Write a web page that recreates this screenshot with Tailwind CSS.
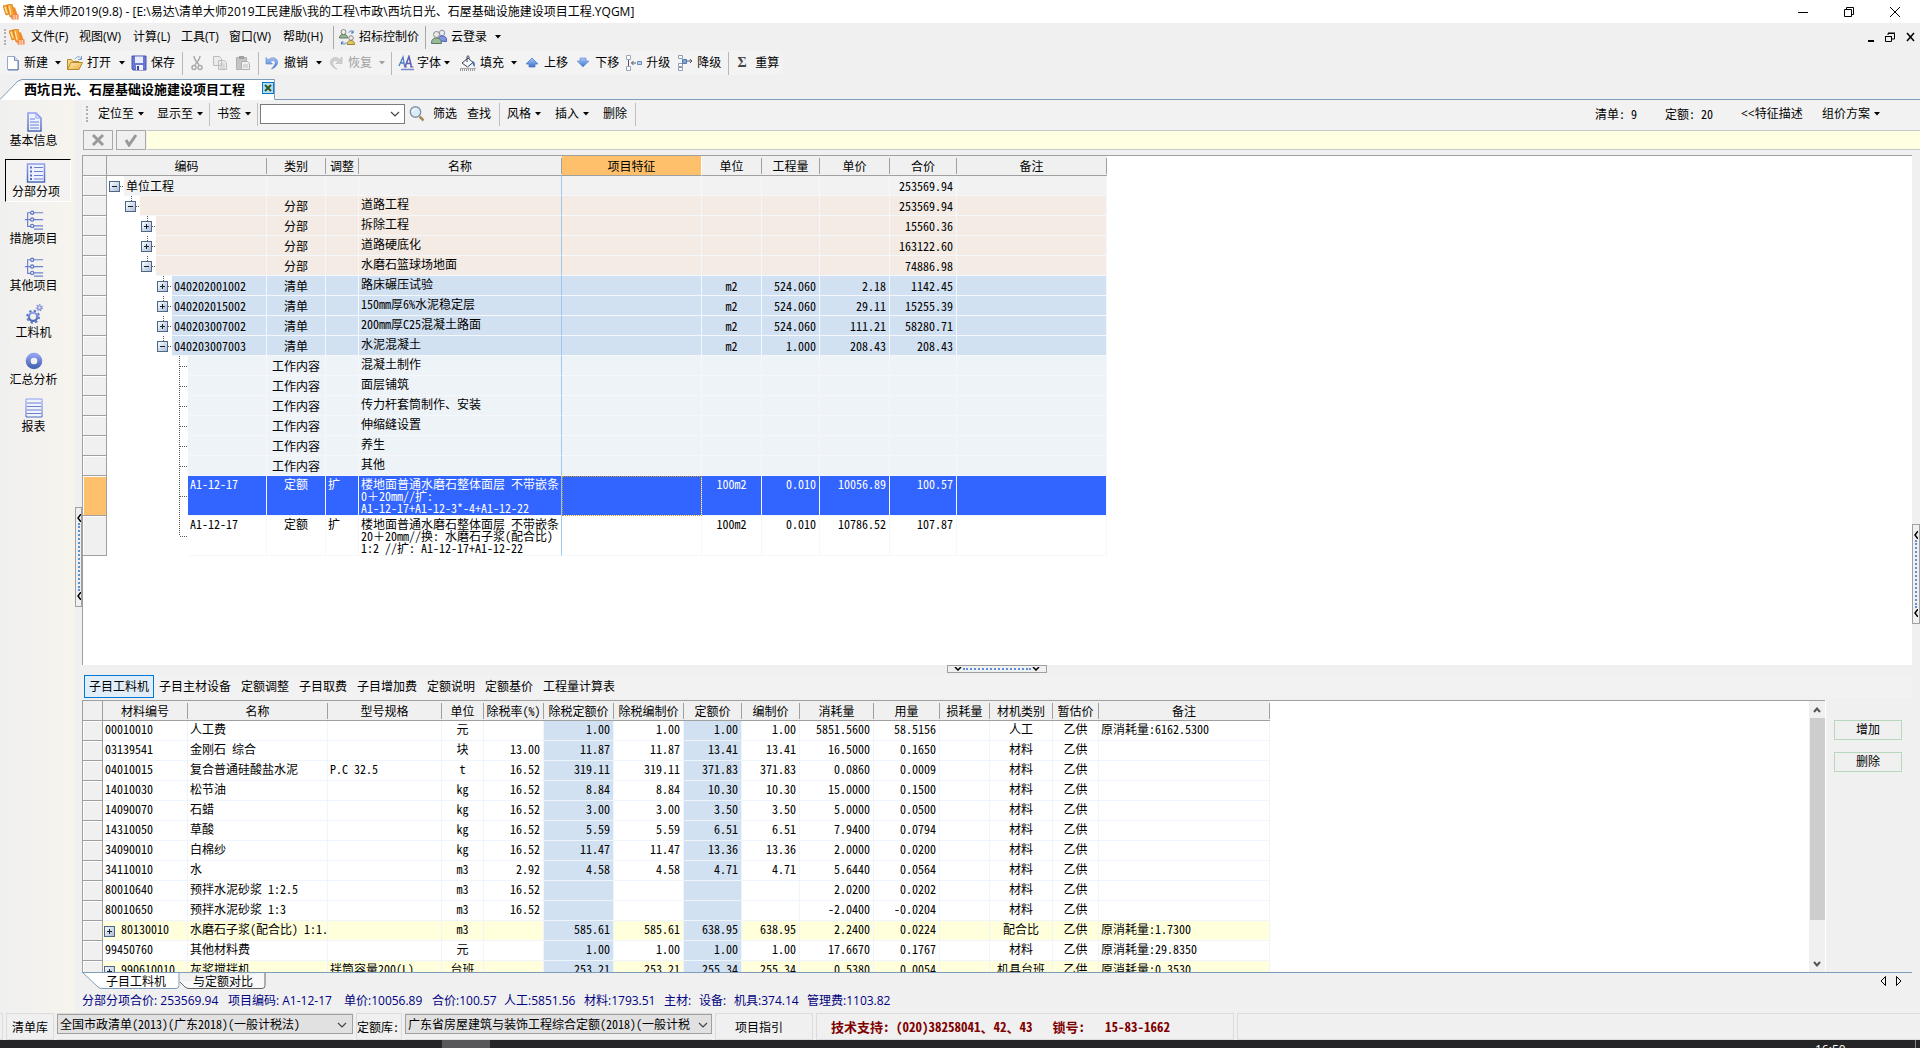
<!DOCTYPE html>
<html lang="zh-CN">
<head>
<meta charset="utf-8">
<title>清单大师2019</title>
<script src="https://cdn.jsdelivr.net/npm/@tailwindcss/browser@4"></script>
</head>
<body class="bg-[#f0f0f0]">
<svg class="absolute h-0 w-0" aria-hidden="true">
  <defs>
    <linearGradient id="gb" x1="0" y1="0" x2="0" y2="1"><stop offset="0" stop-color="#8f9ff0"/><stop offset="1" stop-color="#4a68b4"/></linearGradient>
    <linearGradient id="gx" x1="0" y1="0" x2="1" y2="1"><stop offset="0" stop-color="#ffffff"/><stop offset="1" stop-color="#a9b9d4"/></linearGradient>
    <linearGradient id="gy" x1="0" y1="0" x2="1" y2="1"><stop offset="0" stop-color="#fff3b8"/><stop offset="1" stop-color="#e8a838"/></linearGradient>
    <linearGradient id="gu" x1="0" y1="0" x2="0" y2="1"><stop offset="0" stop-color="#a8c8fa"/><stop offset="1" stop-color="#3f74cc"/></linearGradient>
  </defs>
  <symbol id="logo" viewBox="0 0 16 16"><path d="M0 2 4 1l2 9-3 1zM4 1l5-1 3 11-5 2z" fill="#f5a83a" stroke="#e07c10" stroke-width=".8"/><path d="M2 3l2 6M6 2l2 9" stroke="#ffe6a8" stroke-width="1.200"/><path d="m9 3 3 .5 3 8.500-3 3-5-2 4-1z" fill="#f28a28"/><path d="M8.500 10.500h7v5h-7z" fill="#f27a3a"/><path d="M9.500 12h5M9.500 14h5M11 11v4.500M13.500 11v4.500" stroke="#ffe0c8" stroke-width=".8"/></symbol>
  <symbol id="people" viewBox="0 0 16 16"><circle cx="11" cy="4" r="2.800" fill="#e4e8f2" stroke="#8a94a8"/><path d="M7 12c0-4 2-5 4.500-5S16 8.500 15.500 12.500z" fill="#7f96e0" stroke="#4a5cb0"/><circle cx="5.500" cy="5.500" r="3" fill="#e8e8e4" stroke="#888"/><path d="M.5 14.500C.5 10.500 2 9 5.500 9s5 2 5 5.500z" fill="#9ab89a" stroke="#5c7a60"/></symbol>
  <symbol id="swap" viewBox="0 0 16 16"><circle cx="4.500" cy="3" r="2.500" fill="#ededE6" stroke="#888"/><path d="M.5 9c0-3 2-3.500 4-3.500S8.500 6 8.500 9z" fill="#9ab89a" stroke="#5c7a60"/><circle cx="12" cy="9" r="2.300" fill="#ededE6" stroke="#888"/><path d="M8 15.500c0-3 2-4 4-4s3.500 1 3.500 4z" fill="#e0c860" stroke="#9a8438"/><path d="M10 3.500c1-2 3-2 4 0m0-2v2.500h-2M7 13.500c-1 2-3 2-4.500 0m0 2V13h2" stroke="#3f6cc0" fill="none"/></symbol>
  <symbol id="new" viewBox="0 0 16 16"><path d="M2.500 1.500h7l4 4v9h-11z" fill="#fff" stroke="#93a8ca"/><path d="M13 6v9H3" stroke="#5f7eae" fill="none"/><path d="M9.500 1.500v4h4" fill="#cfdcf2" stroke="#7d93b8"/></symbol>
  <symbol id="open" viewBox="0 0 16 16"><path d="M.5 14.500v-10h4l1.500 2h6v2" fill="#f3d27a" stroke="#b48a2c"/><path d="m.5 14.500 3.500-7h11.500l-3.500 7z" fill="url(#gy)" stroke="#b48a2c"/><path d="M8 4c2-3 5-3 6 0m.5-3V4.500H11" fill="none" stroke="#7a9cd0"/></symbol>
  <symbol id="save" viewBox="0 0 16 16"><path d="M1 1h14v14H2l-1-1z" fill="#6a78d4" stroke="#4a54ac"/><path d="M4 1.500h8V8H4z" fill="#e8ecfc"/><path d="M5 10h7v5H5z" fill="#f0f2fc"/><path d="M6 11h2v4H6z" fill="#34459a"/></symbol>
  <symbol id="cut" viewBox="0 0 16 16"><path d="M5 1c0 4 4 7 5 9M11 1c0 4-4 7-5 9" stroke="#aaa" stroke-width="1.500" fill="none"/><circle cx="5" cy="12.500" r="2" fill="none" stroke="#aaa" stroke-width="1.500"/><circle cx="11" cy="12.500" r="2" fill="none" stroke="#aaa" stroke-width="1.500"/></symbol>
  <symbol id="copy" viewBox="0 0 16 16"><path d="M1.500 1.500h6l2 2v7h-8zM6.500 5.500h6l2 2v7h-8z" fill="#ececec" stroke="#bcbcbc"/><path d="M8 9h5M8 11h5M8 13h5" stroke="#c4c4c4"/></symbol>
  <symbol id="paste" viewBox="0 0 16 16"><path d="M1.500 2.500h10v12h-10z" fill="#c4c4c4" stroke="#b0b0b0"/><path d="M4 1h5v3H4z" fill="#a0a0a0"/><path d="M6.500 6.500h6l2 2v6h-8z" fill="#f0f0f0" stroke="#b0b0b0"/><path d="M8 10h5M8 12h5" stroke="#c0c0c0"/></symbol>
  <symbol id="undo" viewBox="0 0 16 16"><path d="M2 2.500V9h6.500L6.300 6.800c3-2.500 6-.8 4.700 2.200-.8 1.800-2 3-3.500 5C12 12.500 15 8.500 13 5 11 2 7 2.300 4.300 4.800z" fill="url(#gu)" stroke="#5a84c8" stroke-width=".6"/></symbol>
  <symbol id="redo" viewBox="0 0 16 16"><path d="M14 2v6.500H8l2-2c-3-2.500-6 0-5 3 .6 1.600 2 3 4 4.500C4 13 1 8.500 3 4.800 5 1.800 9 2 11.500 4.500z" fill="#d0d0d0" stroke="#b8b8b8" stroke-width=".6"/></symbol>
  <symbol id="font" viewBox="0 0 16 16"><path d="m1 11 4-9 1.500 9M3 8h3" fill="none" stroke="#4c7ec0" stroke-width="1.300"/><path d="m7 12 4-10.500L13.500 12M8.500 8.500h4" fill="none" stroke="#6060b8" stroke-width="1.600"/><path d="M6 12h3M12 12h3.500" stroke="#6060b8"/><path d="M3 14.500h13" stroke="#7a86c8" stroke-width="1.500"/></symbol>
  <symbol id="fill" viewBox="0 0 16 16"><path d="m2 8 6-5 5 4.500-5.500 4.500z" fill="#f4f6fa" stroke="#3c4654"/><path d="M7 7V1.500q1-1.500 2 0V4" stroke="#3c4654" fill="none"/><path d="M12 6c2.500 0 3.500 3 2.500 6-1.500-1-1.500-3-2.500-6z" fill="#3c6cb8"/><path d="M0 14.500h16" stroke="#999" stroke-width="3" stroke-dasharray="1 1"/><path d="M0 13.500h16" stroke="#aaa"/></symbol>
  <symbol id="up" viewBox="0 0 16 16"><path d="m8 3 6 6h-3v3H5V9H2z" fill="url(#gu)" stroke="#4474c4" stroke-width=".7"/></symbol>
  <symbol id="down" viewBox="0 0 16 16"><path d="m8 12 6-6h-3V3H5v3H2z" fill="url(#gu)" stroke="#6a94d8" stroke-width=".7"/></symbol>
  <symbol id="promote" viewBox="0 0 16 16"><path d="M.5.500h4v4h-4zM.5 11.500h4v4h-4z" fill="#fff" stroke="#9aa8bc"/><path d="M11.500 6.500h4v3h-4z" fill="#b9d2f2" stroke="#6b89b8"/><path d="M10 8H5.500M7.500 6l-2 2 2 2M2.500 5v6" stroke="#556" fill="none"/></symbol>
  <symbol id="demote" viewBox="0 0 16 16"><path d="M1.500.500h4v3h-4zM1.500 8.500h4v3h-4zM1.500 12.500h4v3h-4z" fill="#fff" stroke="#8c9cb4"/><path d="M5.500 4.500h4v4h-4z" fill="#7aa6dc" stroke="#5578b0"/><path d="M10 6h5M13 4l2 2-2 2" stroke="#556" fill="none"/></symbol>
  <symbol id="search" viewBox="0 0 16 16"><circle cx="6.500" cy="6" r="5.200" fill="#d8ecfa" stroke="#8494a4" stroke-width="1.400"/><path d="M3.500 6c0-2 1.500-3 3-3" stroke="#fff" fill="none" stroke-width="1.200"/><path d="m10.500 10.500 4 4" stroke="#a88c60" stroke-width="2.500"/></symbol>
  <symbol id="caret" viewBox="0 0 6 4"><path d="M0 0h6L3 3.500z" fill="currentColor"/></symbol>
  <symbol id="chev" viewBox="0 0 10 6"><path d="m1 1 4 4 4-4" fill="none" stroke="#444" stroke-width="1.200"/></symbol>
  <symbol id="plus" viewBox="0 0 11 11"><rect x=".5" y=".5" width="10" height="10" fill="url(#gx)" stroke="#4c6688"/><path d="M3 5.500h5M5.500 3v5" stroke="#123"/></symbol>
  <symbol id="minus" viewBox="0 0 11 11"><rect x=".5" y=".5" width="10" height="10" fill="url(#gx)" stroke="#4c6688"/><path d="M3 5.500h5" stroke="#123"/></symbol>
  <symbol id="doc" viewBox="0 0 20 20"><path d="M4 1h8l5 5v13H4z" fill="#edf0ff" stroke="url(#gb)" stroke-width="1.500"/><path d="M12 1v5h5" fill="none" stroke="#8f9ff0"/><path d="M6 10h9M6 13h9M6 16h9M6 7h5" stroke="#6b80d0"/></symbol>
  <symbol id="list" viewBox="0 0 20 20"><path d="M1.500 1h17v18h-17z" fill="#eef1ff" stroke="url(#gb)" stroke-width="1.500"/><path d="M8 4.500h9M8 8.500h9M8 12.500h9M8 16h9" stroke="#6b80d0"/><path d="M4 4.500h2M4 8.500h2M4 12.500h2M4 16h2" stroke="#5068c0" stroke-width="2"/></symbol>
  <symbol id="tree" viewBox="0 0 20 22"><path d="M8 3H3v15h5M0 10.500h6M9 3h11M9 10.500h11M9 17.500h11M10 21h10" stroke="#6b80cc" stroke-width="1.300" fill="none"/><g fill="#dfe5ff" stroke="#5a72c4" stroke-width="1.200"><circle cx="8" cy="3" r="1.800"/><circle cx="8" cy="10.500" r="1.800"/><circle cx="8" cy="17.500" r="1.800"/></g></symbol>
  <symbol id="gears" viewBox="0 0 20 22"><circle cx="9" cy="14" r="4.600" fill="none" stroke="url(#gb)" stroke-width="2.500"/><circle cx="9" cy="14" r="6.600" fill="none" stroke="#5a76c4" stroke-width="2" stroke-dasharray="2.600 2.580"/><circle cx="16" cy="4" r="2" fill="none" stroke="#8494dc" stroke-width="1.500"/><circle cx="16" cy="4" r="3.400" fill="none" stroke="#8494dc" stroke-width="1.200" stroke-dasharray="1.500 1.550"/></symbol>
  <symbol id="ring" viewBox="0 0 20 20"><circle cx="10" cy="10" r="5.800" fill="none" stroke="url(#gb)" stroke-width="5"/></symbol>
  <symbol id="sheet" viewBox="0 0 20 20"><path d="M2 1h16v18H2z" fill="#f1f3ff" stroke="url(#gb)"/><path d="M3 5h14M3 8.500h14M3 12h14M3 15.500h14" stroke="#6b80d0"/></symbol>
</svg>

<div class="flex h-screen w-full flex-col overflow-hidden bg-[#f0f0f0] text-xs text-black font-['Open_Sans','Noto_Sans_CJK_SC',sans-serif]">

  <!-- title bar -->
  <header class="flex h-[23px] shrink-0 items-center bg-white">
    <svg class="ml-[3px] size-4"><use href="#logo"/></svg>
    <h1 class="ml-1 whitespace-nowrap">清单大师2019(9.8) - [E:\易达\清单大师2019工民建版\我的工程\市政\西坑日光、石屋基础设施建设项目工程.YQGM]</h1>
    <div class="ml-auto flex items-center gap-8 pr-[18px]">
      <button aria-label="最小化" class="grid size-3.5 place-items-center"><svg class="h-3 w-3" viewBox="0 0 12 12"><path d="M1 6.500h10" stroke="#000"/></svg></button>
      <button aria-label="还原" class="grid size-3.5 place-items-center"><svg class="h-3 w-3" viewBox="0 0 12 12"><path d="M1.500 3.500h7v7h-7zM3.500 3.500v-2h7v7h-2" fill="none" stroke="#000"/></svg></button>
      <button aria-label="关闭" class="grid size-3.5 place-items-center"><svg class="h-3 w-3" viewBox="0 0 12 12"><path d="m1 1 10 10M11 1 1 11" stroke="#000"/></svg></button>
    </div>
  </header>

  <!-- menu bar -->
  <nav class="flex h-7 shrink-0 items-center whitespace-nowrap">
    <span class="ml-1 h-4 w-[3px] border-l-2 border-dotted border-[#b0b0b0]"></span>
    <svg class="ml-0.5 size-4"><use href="#logo"/></svg>
    <div class="ml-1.5 flex text-left">
      <button class="w-12 text-left">文件(F)</button><button class="w-[54px] text-left">视图(W)</button><button class="w-12 text-left">计算(L)</button><button class="w-12 text-left">工具(T)</button><button class="w-[54px] text-left">窗口(W)</button><button class="w-[50px] text-left">帮助(H)</button>
    </div>
    <span class="h-[23px] w-px bg-[#a8a8a8]"></span>
    <button class="ml-[5px] flex items-center gap-1"><svg class="size-4"><use href="#swap"/></svg>招标控制价</button>
    <span class="ml-1.5 h-[23px] w-px bg-[#a8a8a8]"></span>
    <button class="ml-[5px] flex items-center gap-1"><svg class="size-4"><use href="#people"/></svg>云登录<svg class="ml-1 h-1 w-1.5"><use href="#caret"/></svg></button>
    <div class="ml-auto flex items-center gap-2 pr-1">
      <button aria-label="最小化文档"><svg class="size-3" viewBox="0 0 12 12"><path d="M4 10h6" stroke="#000" stroke-width="2"/></svg></button>
      <button aria-label="还原文档"><svg class="size-3" viewBox="0 0 12 12"><path d="M1.500 5.500h6v5h-6zM4 4V2.500h6.500V8H8M1 5.500h7M4 2h7" fill="none" stroke="#000"/></svg></button>
      <button aria-label="关闭文档"><svg class="size-3" viewBox="0 0 12 12"><path d="m3 2 7 8M10 2l-7 8" stroke="#000" stroke-width="1.500"/></svg></button>
    </div>
  </nav>

  <!-- main toolbar -->
  <div class="flex h-6 shrink-0 items-center whitespace-nowrap" role="toolbar">
    <div class="flex h-full items-center rounded bg-[#f3f3f3] pr-1">
    <button class="ml-[5px] flex items-center gap-[3px]"><svg class="size-4"><use href="#new"/></svg>新建<svg class="ml-1 h-1 w-1.5"><use href="#caret"/></svg></button>
    <button class="ml-1.5 flex items-center gap-1"><svg class="size-4"><use href="#open"/></svg>打开<svg class="ml-1 h-1 w-1.5"><use href="#caret"/></svg></button>
    <button class="ml-1.5 flex items-center gap-1"><svg class="size-4"><use href="#save"/></svg>保存</button>
    <span class="ml-[7px] h-[23px] w-px bg-[#b8b8b8]"></span>
    <button aria-label="剪切" class="ml-1.5"><svg class="size-4"><use href="#cut"/></svg></button>
    <button aria-label="复制" class="ml-[7px]"><svg class="size-4"><use href="#copy"/></svg></button>
    <button aria-label="粘贴" class="ml-[7px]"><svg class="size-4"><use href="#paste"/></svg></button>
    <span class="ml-[7px] h-[23px] w-px bg-[#b8b8b8]"></span>
    <button class="ml-[5px] flex items-center gap-1"><svg class="size-4"><use href="#undo"/></svg>撤销<svg class="ml-1 h-1 w-1.5"><use href="#caret"/></svg></button>
    <button class="ml-1.5 flex items-center gap-1 text-[#a0a0a0]"><svg class="size-4"><use href="#redo"/></svg>恢复<svg class="ml-[3px] h-1 w-1.5"><use href="#caret"/></svg></button>
    <span class="ml-1.5 h-[23px] w-px bg-[#b8b8b8]"></span>
    <button class="ml-1.5 flex items-center gap-[3px]"><svg class="size-4"><use href="#font"/></svg>字体<svg class="h-1 w-1.5"><use href="#caret"/></svg></button>
    <button class="ml-2.5 flex items-center gap-1"><svg class="size-4"><use href="#fill"/></svg>填充<svg class="ml-[3px] h-1 w-1.5"><use href="#caret"/></svg></button>
    <button class="ml-[7px] flex items-center gap-1"><svg class="size-4"><use href="#up"/></svg>上移</button>
    <button class="ml-[7px] flex items-center gap-1"><svg class="size-4"><use href="#down"/></svg>下移</button>
    <button class="ml-[7px] flex items-center gap-1"><svg class="size-4"><use href="#promote"/></svg>升级</button>
    <button class="ml-[7px] flex items-center gap-1"><svg class="size-4"><use href="#demote"/></svg>降级</button>
    <span class="ml-[7px] h-[23px] w-px bg-[#b8b8b8]"></span>
    <button class="ml-2 flex items-center gap-2"><span class="w-2.5 font-bold text-[#444] font-['Liberation_Serif',serif] text-sm">Σ</span>重算</button>
    </div>
  </div>

  <!-- document tab -->
  <div class="mt-1 flex h-[21px] shrink-0 items-stretch">
    <div class="relative flex w-[275px] items-center">
      <svg class="absolute inset-0 h-full w-full" viewBox="0 0 275 21" preserveAspectRatio="none"><path d="M0 21 18 2l4-1.500h252.500V21z" fill="#fff"/><path d="M0 20.500 18 2l4-1.500h252.500v20" fill="none" stroke="#7f9db9"/></svg>
      <a href="#" class="relative ml-6 whitespace-nowrap pb-0.5 text-[13px] font-bold font-['Noto_Sans_CJK_SC',sans-serif]">西坑日光、石屋基础设施建设项目工程</a>
      <button aria-label="关闭标签" class="relative ml-auto mb-1 mr-px grid size-3 place-items-center border border-[#0a78d0] bg-[#b8dcf4]"><svg class="size-2" viewBox="0 0 8 8"><path d="m1 1 6 6M7 1 1 7" stroke="#2c5a20" stroke-width="2"/></svg></button>
    </div>
    <div class="flex-1 border-b border-[#7f9db9]"></div>
  </div>

  <!-- work area -->
  <div class="flex min-h-0 flex-1">
    <aside class="flex w-[75px] shrink-0 flex-col bg-linear-to-r from-[#f0f0f0] to-[#f7f4ed] pt-2 font-['Noto_Sans_CJK_SC',sans-serif]" id="side"></aside>

    <div class="flex w-[7px] shrink-0 flex-col justify-center">
      <button aria-label="折叠导航" class="flex h-[100px] flex-col items-center justify-between border border-[#a0a0a0] py-1.5"><svg class="h-2 w-1" viewBox="0 0 4 8"><path d="M4 0 1 4l3 4" fill="none" stroke="#000" stroke-width="1.500"/></svg><span class="h-[68px] w-0 border-l-2 border-dotted border-[#5b8fdc]"></span><svg class="h-2 w-1" viewBox="0 0 4 8"><path d="M4 0 1 4l3 4" fill="none" stroke="#000" stroke-width="1.500"/></svg></button>
    </div>

    <main class="flex min-w-0 flex-1 flex-col">
      <!-- grid toolbar -->
      <div class="flex h-[30px] shrink-0 items-center whitespace-nowrap bg-[#f2f2f2] pb-0.5" role="toolbar">
        <span class="ml-1 h-4 w-3 border-l-2 border-dotted border-[#b0b0b0]"></span>
        <button class="flex items-center gap-1">定位至<svg class="h-1 w-1.5"><use href="#caret"/></svg></button>
        <button class="ml-[13px] flex items-center gap-1">显示至<svg class="h-1 w-1.5"><use href="#caret"/></svg></button>
        <span class="ml-1.5 h-[23px] w-px bg-[#c0c0c0]"></span>
        <button class="ml-[7px] flex items-center gap-1">书签<svg class="h-1 w-1.5"><use href="#caret"/></svg></button>
        <span class="ml-1.5 h-[23px] w-px bg-[#c0c0c0]"></span>
        <div class="ml-0.5 flex h-5 w-[145px] items-center border border-[#7a7a7a] bg-white"><input aria-label="查找内容" class="min-w-0 flex-1 px-1 outline-none"><button aria-label="展开" class="pr-1"><svg class="h-1.5 w-2.5"><use href="#chev"/></svg></button></div>
        <svg class="ml-1 size-4"><use href="#search"/></svg>
        <button class="ml-2">筛选</button><button class="ml-2.5">查找</button>
        <span class="ml-2 h-[23px] w-px bg-[#c0c0c0]"></span>
        <button class="ml-[7px] flex items-center gap-1">风格<svg class="h-1 w-1.5"><use href="#caret"/></svg></button>
        <button class="ml-3.5 flex items-center gap-1">插入<svg class="h-1 w-1.5"><use href="#caret"/></svg></button>
        <button class="ml-3.5">删除</button>
        <span class="ml-2 h-[23px] w-px bg-[#c0c0c0]"></span>
        <div class="ml-auto flex items-center pr-10">
          <span class="w-[70px] font-['Noto_Sans_Mono_CJK_SC',monospace]">清单: 9</span><span class="w-[76px] font-['Noto_Sans_Mono_CJK_SC',monospace]">定额: 20</span><button class="w-[81px] text-left">&lt;&lt;特征描述</button>
          <button class="flex items-center gap-1">组价方案<svg class="h-1 w-1.5"><use href="#caret"/></svg></button>
        </div>
      </div>

      <!-- edit bar -->
      <div class="mb-[5px] flex h-5 shrink-0 gap-[3px] pl-px">
        <button aria-label="取消" class="grid w-[30px] place-items-center border border-[#a8a8a8]"><svg class="size-3.5" viewBox="0 0 14 14"><path d="m2 2 10 10M12 2 2 12" stroke="#9a9a9a" stroke-width="3"/></svg></button>
        <button aria-label="确认" class="grid w-[30px] place-items-center border border-[#a8a8a8]"><svg class="size-3.5" viewBox="0 0 14 14"><path d="m2 7 3 5 7-10" fill="none" stroke="#9a9a9a" stroke-width="3"/></svg></button>
        <input aria-label="编辑内容" class="-ml-0.5 min-w-0 flex-1 border-y border-[#c8c8c8] bg-[#ffffe1] outline-none">
      </div>

      <div class="flex min-h-0 flex-1">
        <div class="flex min-w-0 flex-1 flex-col">
          <section class="min-h-0 flex-1 overflow-hidden border-l border-t border-[#a0a0a0] bg-white">
            <table class="w-[1024px] table-fixed border-separate border-spacing-0 font-['Noto_Sans_Mono_CJK_SC','Noto_Sans_CJK_SC',monospace]" id="grid1"></table>
          </section>

          <div class="flex h-2.5 shrink-0 justify-center">
            <button aria-label="折叠明细" class="flex h-2 w-[100px] items-center justify-between border border-[#a0a0a0] px-1.5"><svg class="h-1 w-2" viewBox="0 0 8 4"><path d="m1 0 3 3 3-3" fill="none" stroke="#000" stroke-width="1.500"/></svg><span class="w-[68px] border-t-2 border-dotted border-[#5b8fdc]"></span><svg class="h-1 w-2" viewBox="0 0 8 4"><path d="m1 0 3 3 3-3" fill="none" stroke="#000" stroke-width="1.500"/></svg></button>
          </div>

          <div class="mb-0.5 flex h-[23px] shrink-0 items-stretch whitespace-nowrap bg-[#f2f2f2] pl-0.5">
            <button class="border border-[#0078d7] bg-[#e0eef9] px-1">子目工料机</button><button class="px-[5px]">子目主材设备</button><button class="px-[5px]">定额调整</button><button class="px-[5px]">子目取费</button><button class="px-[5px]">子目增加费</button><button class="px-[5px]">定额说明</button><button class="px-[5px]">定额基价</button><button class="px-[5px]">工程量计算表</button>
          </div>

          <section class="flex h-[272px] shrink-0">
            <div class="min-w-0 flex-1 overflow-hidden border-l border-t border-[#a0a0a0] bg-white">
              <table class="w-[1187px] table-fixed border-separate border-spacing-0 font-['Noto_Sans_Mono_CJK_SC','Noto_Sans_CJK_SC',monospace]" id="grid2"></table>
            </div>
            <div class="flex w-4 flex-col items-center border-t border-[#a0a0a0]">
              <button aria-label="向上滚动" class="grid h-[17px] place-items-center"><svg class="h-1.5 w-2" viewBox="0 0 8 6"><path d="m1 5 3-3.500L7 5" fill="none" stroke="#555" stroke-width="2"/></svg></button>
              <div class="h-[202px] w-[15px] bg-[#cdcdcd]"></div>
              <button aria-label="向下滚动" class="mt-auto grid h-[17px] place-items-center"><svg class="h-1.5 w-2" viewBox="0 0 8 6"><path d="m1 1 3 3.500L7 1" fill="none" stroke="#555" stroke-width="2"/></svg></button>
            </div>
            <div class="flex w-[87px] flex-col gap-3 border-l border-white pl-2 pr-2.5 pt-5">
              <button class="h-5 border border-[#b8d8bc]">增加</button>
              <button class="h-5 border border-[#b8d8bc]">删除</button>
            </div>
          </section>

          <div class="flex h-5 shrink-0 items-start border-t border-[#7f9db9] font-['Noto_Sans_CJK_SC',sans-serif]">
            <a href="#" class="relative grid h-4 w-[98px] place-items-center pl-2.5"><svg class="absolute inset-0 h-4 w-[98px]" viewBox="0 0 98 16"><path d="M0-1 16 14q2 1.500 4 1.500h74q3 0 3-3V-1z" fill="#fff" stroke="#7f9db9"/></svg><span class="relative leading-4">子目工料机</span></a>
            <a href="#" class="relative grid h-4 w-[86px] place-items-center"><svg class="absolute inset-0 h-4 w-[86px]" viewBox="0 0 86 16"><path d="M0 9l5 5q2 1.500 4 1.500h73q3 0 3-3V0" fill="#f8f8f8" stroke="#666"/></svg><span class="relative leading-4">与定额对比</span></a>
            <div class="ml-auto flex h-4 items-center gap-2.5 pr-2.5">
              <button aria-label="上一页"><svg class="h-2.5 w-1.5" viewBox="0 0 6 10"><path d="M5.500.500v9L1 5z" fill="none" stroke="#000"/></svg></button>
              <button aria-label="下一页"><svg class="h-2.5 w-1.5" viewBox="0 0 6 10"><path d="M.5.500v9L5 5z" fill="none" stroke="#000"/></svg></button>
            </div>
          </div>
        </div>

        <div class="flex w-2 shrink-0 flex-col justify-center">
          <button aria-label="展开右侧" class="flex h-[100px] flex-col items-center justify-between border border-[#a0a0a0] py-1.5"><svg class="h-2 w-1" viewBox="0 0 4 8"><path d="M4 0 1 4l3 4" fill="none" stroke="#000" stroke-width="1.500"/></svg><span class="h-[68px] w-0 border-l-2 border-dotted border-[#5b8fdc]"></span><svg class="h-2 w-1" viewBox="0 0 4 8"><path d="M4 0 1 4l3 4" fill="none" stroke="#000" stroke-width="1.500"/></svg></button>
        </div>
      </div>

      <!-- totals -->
      <div class="flex h-[21px] shrink-0 items-center whitespace-nowrap pb-1 text-[#000080]">
        <span class="w-[146px]">分部分项合价: 253569.94</span><span class="w-[116px]">项目编码: A1-12-17</span><span class="w-[88px]">单价:10056.89</span><span class="w-[72px]">合价:100.57</span><span class="w-20">人工:5851.56</span><span class="w-20">材料:1793.51</span><span class="w-[35px]">主材:</span><span class="w-[35px]">设备:</span><span class="w-[73px]">机具:374.14</span><span>管理费:1103.82</span>
      </div>
    </main>
  </div>

  <!-- status bar -->
  <footer class="flex h-[27px] shrink-0 items-stretch gap-[3px] whitespace-nowrap font-['Noto_Sans_Mono_CJK_SC','Noto_Sans_CJK_SC',monospace]">
    <span class="w-[3px] border-y border-r border-[#dcdcdc]"></span>
    <label for="lib1" class="flex w-12 items-center justify-center border border-[#dcdcdc]">清单库</label>
    <div class="relative w-[296px] border-y border-[#dcdcdc]">
      <select id="lib1" class="h-5 w-full appearance-none border border-[#a0a0a0] bg-[#e1e1e1] px-0.5 leading-4"><option>全国市政清单(2013)(广东2018)(一般计税法)</option></select>
      <svg class="pointer-events-none absolute right-1.5 top-2 h-1.5 w-2.5"><use href="#chev"/></svg>
    </div>
    <label for="lib2" class="flex w-[46px] items-center border border-[#dcdcdc]">定额库:</label>
    <div class="relative w-[307px] border-y border-[#dcdcdc]">
      <select id="lib2" class="h-5 w-full appearance-none border border-[#a0a0a0] bg-[#e1e1e1] pl-0.5 pr-5 leading-4"><option>广东省房屋建筑与装饰工程综合定额(2018)(一般计税</option></select>
      <svg class="pointer-events-none absolute right-1 top-2 h-1.5 w-2.5"><use href="#chev"/></svg>
    </div>
    <button class="w-[98px] border border-[#dcdcdc] pr-2.5">项目指引</button>
    <div class="flex w-[418px] items-center gap-5 border border-[#dcdcdc] px-3.5 text-[13px] font-bold text-[#800000]"><span>技术支持: (020)38258041、42、43</span><span>锁号:</span><span>15-83-1662</span></div>
    <span class="flex-1 border-y border-l border-[#dcdcdc]"></span>
  </footer>

  <!-- desktop task bar -->
  <div class="flex h-2 shrink-0 overflow-hidden bg-[#252527]">
    <span class="ml-[442px] w-12 bg-[#58585a]"></span>
    <span class="ml-auto w-[100px] pt-1 leading-3 text-white">16:50</span>
    <span class="mr-1 w-px bg-[#888]"></span>
  </div>
</div>

<script>
const use = (id, cls) => `<svg class="${cls}"><use href="#${id}"/></svg>`;

/* side navigation */
document.getElementById('side').innerHTML = [
  ['doc', '基本信息'], ['list', '分部分项'], ['tree', '措施项目'], ['tree', '其他项目'], ['gears', '工料机'], ['ring', '汇总分析'], ['sheet', '报表'],
].map(([icon, text], i) => `<button class="${i === 1
    ? 'mb-1 ml-[5px] mr-1 flex h-[43px] flex-col items-center justify-center border border-b-white border-l-black border-r-white border-t-black bg-[#f4f3f1] pr-1'
    : i === 0 ? 'mb-2 flex h-[43px] flex-col items-center justify-center pr-2'
    : 'mb-1 flex h-[43px] flex-col items-center justify-center pr-2'}">${use(icon, 'size-5 shrink-0')}<span class="leading-4">${text}</span></button>`).join('');

const rowHead = 'border-b border-r border-[#a0a0a0] bg-[#f0f0f0] p-0 shadow-[inset_1px_1px_0_#fff]';
const headers = (names, hot) => `<thead><tr>` + names.map((n, i) => i === 0
  ? `<th class="h-5 border-b border-r border-[#a0a0a0] bg-[#f0f0f0] p-0"></th>`
  : n === hot
    ? `<th scope="col" class="h-5 border-b border-r border-b-[#a0a0a0] border-r-white bg-[#ffc06c] p-0 font-normal leading-4">${n}</th>`
    : `<th scope="col" class="h-5 border-b border-[#a0a0a0] bg-[#f0f0f0] p-0 font-normal"><div class="h-4 overflow-hidden whitespace-nowrap border-r border-[#a0a0a0] leading-4">${n}</div></th>`).join('') + `</tr></thead>`;
const cols = ws => '<colgroup>' + ws.map(w => `<col style="width:${w}px">`).join('') + '</colgroup>';

/* bill tree: [kind, level, expander, code, category, adjust, name, unit, quantity, price, total] */
const bill = [
  ['root', 0, 'minus', '单位工程', '', '', '', '', '', '', '253569.94'],
  ['part', 1, 'minus', '', '分部', '', '道路工程', '', '', '', '253569.94'],
  ['part', 2, 'plus', '', '分部', '', '拆除工程', '', '', '', '15560.36'],
  ['part', 2, 'plus', '', '分部', '', '道路硬底化', '', '', '', '163122.60'],
  ['part', 2, 'minus', '', '分部', '', '水磨石篮球场地面', '', '', '', '74886.98'],
  ['item', 3, 'plus', '040202001002', '清单', '', '路床碾压试验', 'm2', '524.060', '2.18', '1142.45'],
  ['item', 3, 'plus', '040202015002', '清单', '', '150mm厚6%水泥稳定层', 'm2', '524.060', '29.11', '15255.39'],
  ['item', 3, 'plus', '040203007002', '清单', '', '200mm厚C25混凝土路面', 'm2', '524.060', '111.21', '58280.71'],
  ['item', 3, 'minus', '040203007003', '清单', '', '水泥混凝土', 'm2', '1.000', '208.43', '208.43'],
  ...['混凝土制作', '面层铺筑', '传力杆套筒制作、安装', '伸缩缝设置', '养生', '其他'].map(n => ['work', 4, '', '', '工作内容', '', n, '', '', '', '']),
  ['sel', 4, '', 'A1-12-17', '定额', '扩', '楼地面普通水磨石整体面层 不带嵌条<br>0＋20mm//扩:<br>A1-12-17+A1-12-3*-4+A1-12-22', '100m2', '0.010', '10056.89', '100.57'],
  ['last', 4, '', 'A1-12-17', '定额', '扩', '楼地面普通水磨石整体面层 不带嵌条<br>20＋20mm//换: 水磨石子浆(配合比)<br>1:2 //扩: A1-12-17+A1-12-22', '100m2', '0.010', '10786.52', '107.87'],
];
const fill = { root: 'bg-[#f2f2f2]', part: 'bg-[#f3ebe4]', item: 'bg-[#d2e1f2]', work: 'bg-[#eef3f8]', sel: 'bg-[#3264ff] text-white', last: 'bg-white' };
function gutter(level, box, tall, last) {
  const w = 17 + level * 16, x = w - 15, h = tall ? 40 : 20;
  const dots = 'stroke="#555" stroke-dasharray="1 1"';
  const lines = box
    ? `<path d="M${x + 11} 10.5H${w}" ${dots}/>` + (level ? `<path d="M${x + 6.5} 0V5" ${dots}/>` : '')
    : `<path d="M${x + 6.5} 0V${last ? 20 : h}M${x + 7} ${tall ? 20.5 : 10.5}H${w}" ${dots}/>`;
  return `<svg width="${w}" height="${h}" class="shrink-0">${lines}${box ? `<use href="#${box}" x="${x}" y="5" width="11" height="11"/>` : ''}</svg>`;
}
document.getElementById('grid1').innerHTML = cols([24, 160, 59, 33, 203, 140, 60, 58, 70, 67, 150])
  + headers(['', '编码', '类别', '调整', '名称', '项目特征', '单位', '工程量', '单价', '合价', '备注'], '项目特征') + '<tbody>'
  + bill.map(([kind, level, box, code, cat, adj, name, unit, qty, price, total]) => {
    const tall = kind === 'sel' || kind === 'last';
    const f = fill[kind];
    const v = tall ? 'align-top leading-4' : 'align-middle leading-4';
    const c = `overflow-hidden whitespace-nowrap border-b border-r border-[#f4f8fd] p-0 ${v} ${f}`;
    return `<tr class="${tall ? 'h-10' : 'h-5'}"><td class="${kind === 'sel' ? 'border-b border-r border-[#a0a0a0] bg-[#ffc06c] p-0 shadow-[inset_1px_1px_0_#fff]' : rowHead}"></td>
<td class="p-0"><div class="${tall ? 'flex h-10' : 'flex h-5'}">${gutter(level, box, tall, kind === 'last')}<div class="min-w-0 flex-1 whitespace-nowrap border-b border-r border-[#f4f8fd] pl-0.5 ${tall ? 'leading-4' : 'leading-5'} ${f}">${code}</div></div></td>
<td class="${c} text-center">${cat}</td><td class="${c} pl-0.5">${adj}</td>
<td class="overflow-hidden whitespace-nowrap border-b border-r border-b-[#f4f8fd] border-r-[#9cc8f0] p-0 pl-0.5 pt-0.5 align-top leading-3 ${f}">${name}</td>
<td class="${c} ${kind === 'sel' ? 'outline-1 -outline-offset-1 outline-dotted outline-[#c89628]' : ''}"></td>
<td class="${c} text-center">${unit}</td><td class="${c} pr-[3px] text-right">${qty}</td><td class="${c} pr-[3px] text-right">${price}</td><td class="${c} pr-[3px] text-right">${total}</td><td class="${c}"></td></tr>`;
  }).join('') + '</tbody>';

/* resources of the selected item */
const res = [
  ['00010010', '人工费', '', '元', '', '1.00', '1.00', '1.00', '1.00', '5851.5600', '58.5156', '人工', '原消耗量:6162.5300'],
  ['03139541', '金刚石 综合', '', '块', '13.00', '11.87', '11.87', '13.41', '13.41', '16.5000', '0.1650', '材料', ''],
  ['04010015', '复合普通硅酸盐水泥', 'P.C 32.5', 't', '16.52', '319.11', '319.11', '371.83', '371.83', '0.0860', '0.0009', '材料', ''],
  ['14010030', '松节油', '', 'kg', '16.52', '8.84', '8.84', '10.30', '10.30', '15.0000', '0.1500', '材料', ''],
  ['14090070', '石蜡', '', 'kg', '16.52', '3.00', '3.00', '3.50', '3.50', '5.0000', '0.0500', '材料', ''],
  ['14310050', '草酸', '', 'kg', '16.52', '5.59', '5.59', '6.51', '6.51', '7.9400', '0.0794', '材料', ''],
  ['34090010', '白棉纱', '', 'kg', '16.52', '11.47', '11.47', '13.36', '13.36', '2.0000', '0.0200', '材料', ''],
  ['34110010', '水', '', 'm3', '2.92', '4.58', '4.58', '4.71', '4.71', '5.6440', '0.0564', '材料', ''],
  ['80010640', '预拌水泥砂浆 1:2.5', '', 'm3', '16.52', '', '', '', '', '2.0200', '0.0202', '材料', ''],
  ['80010650', '预拌水泥砂浆 1:3', '', 'm3', '16.52', '', '', '', '', '-2.0400', '-0.0204', '材料', ''],
  ['+80130010', '水磨石子浆(配合比) 1:1.', '', 'm3', '', '585.61', '585.61', '638.95', '638.95', '2.2400', '0.0224', '配合比', '原消耗量:1.7300'],
  ['99450760', '其他材料费', '', '元', '', '1.00', '1.00', '1.00', '1.00', '17.6670', '0.1767', '材料', '原消耗量:29.8350'],
  ['+990610010', '灰浆搅拌机', '拌筒容量200(L)', '台班', '', '253.21', '253.21', '255.34', '255.34', '0.5380', '0.0054', '机具台班', '原消耗量:0.3530'],
];
document.getElementById('grid2').innerHTML = cols([20, 85, 140, 114, 42, 60, 70, 70, 58, 58, 74, 66, 50, 63, 46, 171])
  + headers(['', '材料编号', '名称', '型号规格', '单位', '除税率(%)', '除税定额价', '除税编制价', '定额价', '编制价', '消耗量', '用量', '损耗量', '材机类别', '暂估价', '备注']) + '<tbody>'
  + res.map(r => {
    const group = r[0][0] === '+';
    const bg = group ? 'bg-[#ffffdc]' : 'bg-white';
    const code = group ? `<div class="flex h-4 items-center gap-1.5">${use('plus', '-ml-px mt-1 size-[11px] shrink-0')}<span>${r[0].slice(1)}</span></div>` : r[0];
    const cells = [code, ...r.slice(1, 11), '', r[11], '乙供', r[12]];
    const align = ['', '', '', 'text-center', 'text-right', 'text-right', 'text-right', 'text-right', 'text-right', 'text-right', 'text-right', '', 'text-center', 'text-center', ''];
    return `<tr class="h-5"><td class="${rowHead}"></td>` + cells.map((t, i) =>
      `<td class="overflow-hidden whitespace-nowrap border-b border-r border-[#eff5fc] py-0 align-top leading-4 ${align[i] === 'text-center' ? 'px-0' : 'pl-0.5 pr-[3px]'} ${align[i]} ${i === 5 || i === 7 ? 'bg-[#d2e1f2]' : bg}">${t}</td>`).join('') + '</tr>';
  }).join('') + '</tbody>';
</script>
</body>
</html>
